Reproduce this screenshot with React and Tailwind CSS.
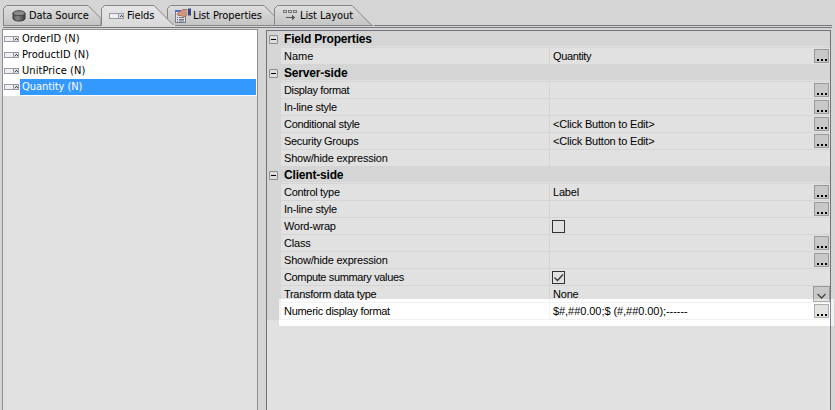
import React from "react";

const tahoma = "font-['DejaVu_Sans_Condensed','DejaVu_Sans',sans-serif] [font-stretch:condensed] text-[11px]";

function FieldIcon() {
  return (
    <svg width="15" height="6" className="block shrink-0" shapeRendering="crispEdges">
      <rect x="0.5" y="0.5" width="9" height="5" fill="#f0f0f2" stroke="#9a9aa6" />
      <rect x="9.5" y="0.5" width="5" height="5" fill="#dcdce4" stroke="#9a9aa6" />
      <path d="M12 2h1v1h1v1h-1v-1h-1v1h-1v-1h1z" fill="#444" />
    </svg>
  );
}

function DataIcon() {
  return (
    <svg width="15" height="12" className="block shrink-0">
      <defs>
        <linearGradient id="drum" x1="0" y1="0" x2="1" y2="0">
          <stop offset="0" stopColor="#555" />
          <stop offset=".4" stopColor="#888" />
          <stop offset="1" stopColor="#3c3c3c" />
        </linearGradient>
      </defs>
      <path d="M1 3v5.500c0 1.500 2.700 2.500 6 2.500s6-1 6-2.500V3z" fill="url(#drum)" stroke="#3a3a3a" />
      <ellipse cx="7" cy="3.200" rx="6" ry="2.500" fill="#8c8c8c" stroke="#444" />
    </svg>
  );
}

function HandListIcon() {
  return (
    <svg width="17" height="16" className="block shrink-0">
      <rect x="0.500" y="3.500" width="10" height="11" fill="#dfe1e6" stroke="#777c88" />
      <path d="M0 3h6" stroke="#4a6fc8" strokeWidth="2" />
      <path d="M2 9.500h1M2 11.500h1M2 13h1M4 9.500h5M4 11.500h5M4 13h5" stroke="#6b7080" />
      <path d="M2 6l3.500-3L8 1.500h4.500v5L10.500 8 8.500 9 6.500 7.500 3 7.500z" fill="#d0957a" stroke="#a0684e" strokeWidth=".8" />
      <path d="M12 1h1v6h-1z" fill="#b9b9cc" />
      <path d="M13 .5h3v7h-3z" fill="#35468c" />
    </svg>
  );
}

function LayoutIcon() {
  return (
    <svg width="15" height="11" className="block shrink-0" shapeRendering="crispEdges">
      <g fill="none" stroke="#777">
        <rect x="0.500" y="0.500" width="3" height="2" />
        <rect x="5.500" y="0.500" width="3" height="2" />
        <rect x="10.500" y="0.500" width="3" height="2" />
      </g>
      <path d="M3 7.500h9M9.500 5v5M10.500 6v3" stroke="#555" />
    </svg>
  );
}

const tabs = [
  { label: "Data Source", icon: <DataIcon />, box: "w-[98px] pl-[9px] gap-[2px]", top: 85, full: 98 },
  { label: "Fields", icon: <FieldIcon />, box: "w-[66px] pl-[8px] gap-[3px]", top: 53, full: 75, active: true },
  { label: "List Properties", icon: <HandListIcon />, box: "w-[107px] pl-[8px] gap-[1px]", top: 97, full: 118 },
  { label: "List Layout", icon: <LayoutIcon />, box: "w-[100px] pl-[9px] gap-[2px]", top: 78, full: 99 },
];

function Tab({ t, first }) {
  const cut = first ? 98 : t.top + 20;
  return (
    <div className={`relative h-[21px] flex items-center shrink-0 ${t.active ? "z-10" : ""} ${t.box}`}>
      <svg className="absolute left-0 top-0 overflow-visible" width={t.full} height="22">
        <defs>
          <linearGradient id={t.label.replace(" ", "")} x1="0" y1="0" x2="0" y2="1">
            <stop offset="0" stopColor={t.active ? "#e6e6e6" : "#dedede"} />
            <stop offset="1" stopColor={t.active ? "#dadada" : "#c4c4c4"} />
          </linearGradient>
        </defs>
        <path
          d={first ? `M.5 20.500V3.500L3.500 .5H${t.top}L${cut} 13.500V20.500` : `M.5 20.500V3.500L3.500 .5H${t.top}L${cut} 20.500`}
          fill={`url(#${t.label.replace(" ", "")})`}
          stroke="#858585"
        />
        {t.active ? <path d="M1 20.500H74" stroke="#dadada" /> : <path d={`M0 20.500H${t.full}`} stroke="#858585" />}
      </svg>
      <span className="relative">{t.icon}</span>
      <span className="relative whitespace-nowrap tracking-[-0.1px]">{t.label}</span>
    </div>
  );
}

const fields = ["OrderID (N)", "ProductID (N)", "UnitPrice (N)", "Quantity (N)"];

const t2 = "tracking-[-0.2px]";
const t3 = "tracking-[-0.3px]";
const t4 = "tracking-[-0.36px]";

const rows = [
  { head: "Field Properties" },
  { label: "Name", value: "Quantity", vt: t4, btn: true },
  { head: "Server-side" },
  { label: "Display format", lt: t4, btn: true },
  { label: "In-line style", lt: t2, btn: true },
  { label: "Conditional style", lt: t3, value: "<Click Button to Edit>", vt: t2, btn: true },
  { label: "Security Groups", lt: t3, value: "<Click Button to Edit>", vt: t2, btn: true },
  { label: "Show/hide expression", lt: t2 },
  { head: "Client-side" },
  { label: "Control type", lt: t3, value: "Label", vt: t2, btn: true },
  { label: "In-line style", lt: t2, btn: true },
  { label: "Word-wrap", lt: t2, check: "off" },
  { label: "Class", lt: t2, btn: true },
  { label: "Show/hide expression", lt: t2, btn: true },
  { label: "Compute summary values", lt: t4, check: "on" },
  { label: "Transform data type", lt: t3, value: "None", vt: t2, combo: true },
  { label: "Numeric display format", lt: t3, value: "$#,##0.00;$ (#,##0.00);------", vt: "tracking-[-0.06px]", btn: true },
];

function Check({ on }) {
  return (
    <span className="ml-[2px] mt-[2px] block size-[13px] border border-[#333]">
      {on && (
        <svg width="11" height="11" className="block">
          <path d="M1.500 5.500L4.500 8.500L10 2.500" fill="none" stroke="#333" strokeWidth="1.300" />
        </svg>
      )}
    </span>
  );
}

function Row({ r }) {
  if (r.head)
    return (
      <div className="flex h-[17px] bg-[#d5d5d5]">
        <div className="w-[14px] pl-[2px] pt-[4px]">
          <div className="flex size-[9px] items-center justify-center rounded-[1px] border border-[#8c8c8c] bg-[#dedede]">
            <div className="h-px w-[5px] bg-black" />
          </div>
        </div>
        <div className="h-[16px] flex-1 border-b border-[#dedede] pl-[3px] text-[12px] leading-[16px] font-bold tracking-[-0.18px]">{r.head}</div>
      </div>
    );
  return (
    <div className="flex h-[17px] bg-[#d5d5d5]">
      <div className="w-[14px]" />
      <div className="flex h-[16px] flex-1 bg-[#e1e1e1]">
        <div className={`h-[17px] w-[268px] whitespace-nowrap pl-[3px] leading-[17px] ${r.lt || ""}`}>{r.label}</div>
        <div className="h-[17px] w-px bg-[#d5d5d5]" />
        <div className="h-[17px] flex-1 whitespace-nowrap leading-[17px]">
          {r.value && <span className={`ml-[3px] ${r.vt || ""}`}>{r.value}</span>}
          {r.check && <Check on={r.check === "on"} />}
        </div>
        {r.btn && (
          <div className="mr-px mt-px flex h-[14px] w-[15px] items-end justify-center gap-[2px] border border-[#999] bg-[#c8c8c8] pb-px">
            <i className="size-[2px] bg-black" />
            <i className="size-[2px] bg-black" />
            <i className="size-[2px] bg-black" />
          </div>
        )}
        {r.combo && (
          <div className="flex h-[16px] w-[17px] items-center justify-center border border-[#999] bg-[#c8c8c8] pt-[3px]">
            <svg width="9" height="6"><path d="M.5 1L4.500 5L8.500 1" fill="none" stroke="#444" strokeWidth="1.300" /></svg>
          </div>
        )}
      </div>
    </div>
  );
}

export default function App() {
  return (
    <div className="relative flex h-[410px] w-[835px] flex-col overflow-hidden bg-[#d5d5d5] text-black">
      <div className={`flex h-[26px] shrink-0 pl-[3px] pt-[5px] leading-[20px] ${tahoma}`}>
        {tabs.map((t, i) => (
          <Tab key={t.label} t={t} first={i === 0} />
        ))}
        <div className="mt-[20px] mr-[3px] h-px flex-1 bg-[#77777c]" />
      </div>
      <div className="mr-[3px] ml-[3px] mt-px h-px shrink-0 bg-[#77777c]" />
      <div className="flex min-h-0 flex-1 pt-px">
        <div className="ml-[2px] w-[256px] border-x border-t border-[#8f8f8f] bg-[#e1e1e1]">
          <div className={`bg-white pt-px pb-px pr-px ${tahoma}`}>
            {fields.map((f, i) => (
              <div key={f} className="flex h-[16px] items-center">
                <div className="w-[17px] pl-px"><FieldIcon /></div>
                <div className={`h-[16px] flex-1 pl-[2px] leading-[16px] ${i === 3 ? "bg-[#3399ff] text-white tracking-[-0.05px]" : "tracking-[0.06px]"}`}>{f}</div>
              </div>
            ))}
          </div>
        </div>
        <div className="mt-px ml-[8px] w-[565px] border-x border-t border-[#72727f] bg-[#e1e1e1] font-['Liberation_Sans',Arial,sans-serif] text-[11px]">
          {rows.map((r, i) => (
            <Row key={i} r={r} />
          ))}
        </div>
      </div>
      <div className="absolute left-[279px] top-[299px] h-[27px] w-[555px] backdrop-brightness-[1.135]" />
    </div>
  );
}
